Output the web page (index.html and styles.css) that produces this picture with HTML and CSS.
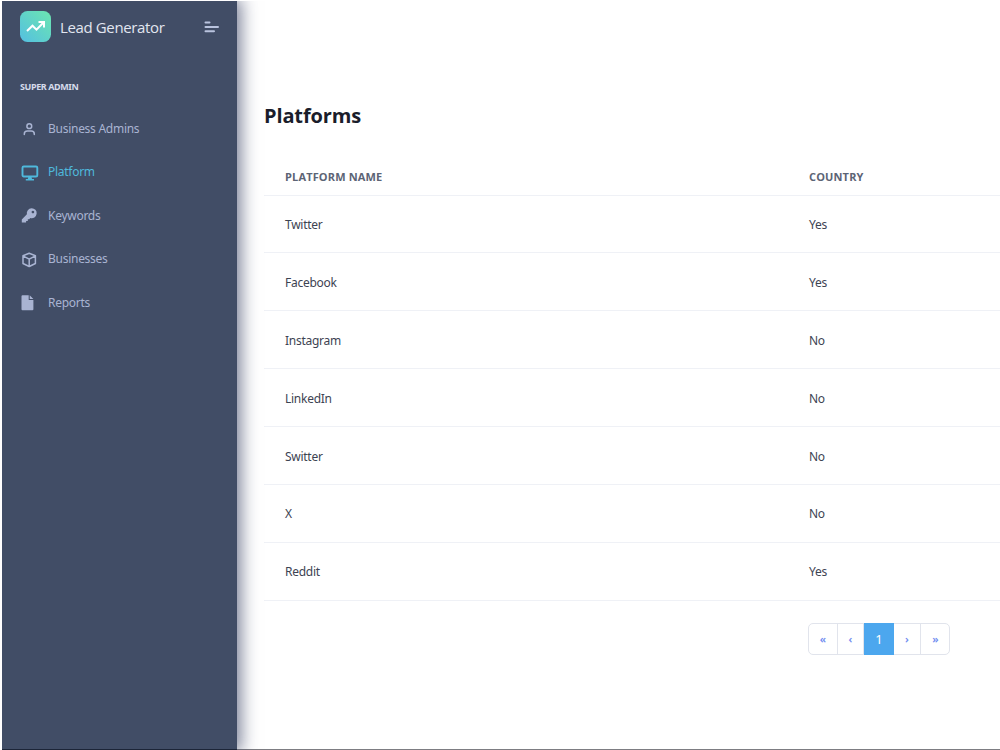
FILE: index.html
```html
<!doctype html>
<html lang="en">
<head>
<meta charset="utf-8">
<meta name="viewport" content="width=device-width, initial-scale=1">
<title>Lead Generator - Platforms</title>
<link rel="stylesheet" href="styles.css">
</head>
<body>

<div class="app">

	<aside class="sidebar">

		<div class="brand">
			<svg class="logo" viewBox="0 0 31 31" width="31" height="31">
				<defs>
					<linearGradient id="logoFill" x1="0" y1="1" x2="1" y2="0">
						<stop offset="0" stop-color="#54bfe2"/>
						<stop offset="1" stop-color="#6ce6b0"/>
					</linearGradient>
				</defs>
				<rect width="31" height="31" rx="7.5" fill="url(#logoFill)"/>
				<path d="M7 20l5.500-5.300 4 4L23.500 11.500M18.500 11h5.500v5.500" fill="none" stroke="#fff" stroke-width="2"/>
			</svg>
			<span class="brand-name">Lead Generator</span>
			<svg class="toggle" viewBox="0 0 15 12" width="15" height="12">
				<path d="M1.500 1.500h4M1.500 6h12.500M1.500 10.300h8.500" fill="none" stroke="#b9c3de" stroke-width="2" stroke-linecap="round"/>
			</svg>
		</div>

		<div class="nav-title">SUPER ADMIN</div>

		<nav class="nav">
			<a class="nav-item" href="#">
				<svg viewBox="0 0 18 18" width="18" height="18">
					<g fill="none" stroke="currentColor" stroke-width="1.500" stroke-linecap="round">
						<circle cx="8.300" cy="6.200" r="2.400"/>
						<path d="M3.300 14.500v-.5a3 3 0 0 1 3-3h4a3 3 0 0 1 3 3v.5"/>
					</g>
				</svg>
				<span>Business Admins</span>
			</a>
			<a class="nav-item active" href="#">
				<svg viewBox="0 0 18 18" width="18" height="18">
					<rect x="1.500" y="2.500" width="14.800" height="10" rx="1.300" fill="none" stroke="currentColor" stroke-width="1.900"/>
					<path d="M7.300 13h3.200l.5 2h2v1.500H4.800V15h2z" fill="currentColor"/>
				</svg>
				<span>Platform</span>
			</a>
			<a class="nav-item" href="#">
				<svg viewBox="0 0 18 18" width="18" height="18">
					<path fill="currentColor" fill-rule="evenodd" d="M10.600 1.200a5 5 0 1 1-1.300 9.800L8.200 12.200H6.800v1.700H5.100v1.700H.800v-3.200l5.100-5.100a5 5 0 0 1 4.700-6.100zM11.900 3.700a1.300 1.300 0 1 0 .01 0z"/>
				</svg>
				<span>Keywords</span>
			</a>
			<a class="nav-item" href="#">
				<svg viewBox="0 0 18 18" width="18" height="18">
					<path fill="none" stroke="currentColor" stroke-width="1.500" stroke-linejoin="round" d="M8.200 2.200l6.200 2.600v7.700l-6.200 3-6.200-3V4.800zM2.400 5.200l5.800 3 5.800-3M8.200 8.200v7"/>
				</svg>
				<span>Businesses</span>
			</a>
			<a class="nav-item" href="#">
				<svg viewBox="0 0 18 18" width="18" height="18">
					<path fill="currentColor" d="M1.500 1.200h6.200v4.900h4.700v9.100a1 1 0 0 1-1 1H1.500a1 1 0 0 1-1-1v-13a1 1 0 0 1 1-1zM8.700 1.200l3.700 3.900H8.700z"/>
				</svg>
				<span>Reports</span>
			</a>
		</nav>

	</aside>

	<main class="content">

		<h1>Platforms</h1>

		<table class="platforms">
			<thead>
				<tr><th class="name">PLATFORM NAME</th><th>COUNTRY</th></tr>
			</thead>
			<tbody>
				<tr><td>Twitter</td><td>Yes</td></tr>
				<tr><td>Facebook</td><td>Yes</td></tr>
				<tr><td>Instagram</td><td>No</td></tr>
				<tr><td>LinkedIn</td><td>No</td></tr>
				<tr><td>Switter</td><td>No</td></tr>
				<tr><td>X</td><td>No</td></tr>
				<tr><td>Reddit</td><td>Yes</td></tr>
			</tbody>
		</table>

		<div class="pagination">
			<a class="page" href="#">«</a>
			<a class="page prev" href="#">‹</a>
			<a class="page current" href="#">1</a>
			<a class="page next" href="#">›</a>
			<a class="page" href="#">»</a>
		</div>

	</main>

</div>

</body>
</html>
```
FILE: styles.css
```css
* { box-sizing: border-box; }

body { background: #fff; color: #3d4352; font: 12px "Noto Sans", "Open Sans", sans-serif; margin: 0; overflow: hidden; }
a { color: inherit; text-decoration: none; }

.app { display: flex; height: 750px; padding: 1px 0 0 2px; }

/* sidebar */

.sidebar { background: #414d66; border-bottom: 1px solid #1c2538; box-shadow: 2px 0 16px 2px rgba(50, 60, 95, 0.65); clip-path: inset(0 -40px 0 0); flex: none; padding: 10px 18px; width: 235px; }

.brand { align-items: center; display: flex; height: 31px; }
.brand-name { color: #e2e6f0; font-family: "Open Sans", sans-serif; font-size: 15px; letter-spacing: -0.37px; margin-left: 9px; }
.toggle { margin-left: auto; }

.nav-title { color: #d5dbea; font-size: 9px; font-weight: 700; letter-spacing: -0.4px; line-height: 12px; margin-top: 39px; }

.nav { display: flex; flex-direction: column; margin-top: 13px; }
.nav-item { align-items: center; color: #a9b4d2; display: flex; gap: 9px; height: 43.5px; letter-spacing: -0.27px; padding: 1px 0 0 1px; }
.nav-item svg { position: relative; top: 1px; }
.nav-item.active { color: #4fb9dc; }

/* content */

.content { border-bottom: 1px solid #7d7d82; flex: 1; min-width: 0; padding: 101px 0 0 27px; }

h1 { color: #1a1d2b; font-family: "Open Sans", sans-serif; font-size: 20px; font-weight: 700; letter-spacing: -0.13px; line-height: 28px; margin: 0; }

.platforms { border-collapse: collapse; margin-top: 28px; table-layout: fixed; width: 100%; }
.platforms th, .platforms td { border-bottom: 1px solid #eff1f6; padding: 0 0 0 21px; text-align: left; }
.platforms th { color: #5c6475; font-family: "Open Sans", sans-serif; font-size: 11px; font-weight: 700; height: 37px; letter-spacing: 0.15px; }
.platforms th.name { width: 524px; }
.platforms td { height: 57.9px; letter-spacing: -0.27px; padding-top: 1px; }

.pagination { border: 1px solid #e1e4ec; border-radius: 5px; display: flex; height: 32px; margin: 22px 0 0 544px; width: 142px; }
.page { align-items: center; border-right: 1px solid #e1e4ec; color: #6f8cf0; display: flex; flex: none; font-size: 11px; font-weight: 600; justify-content: center; width: 29px; }
.page.prev { width: 26px; }
.page.next { width: 27px; }
.page.current { background: #4ca7ee; border: 0; color: #fff; font-size: 13px; font-weight: 400; margin: -1px 0; width: 30px; }
.page:last-child { border: 0; }
```
